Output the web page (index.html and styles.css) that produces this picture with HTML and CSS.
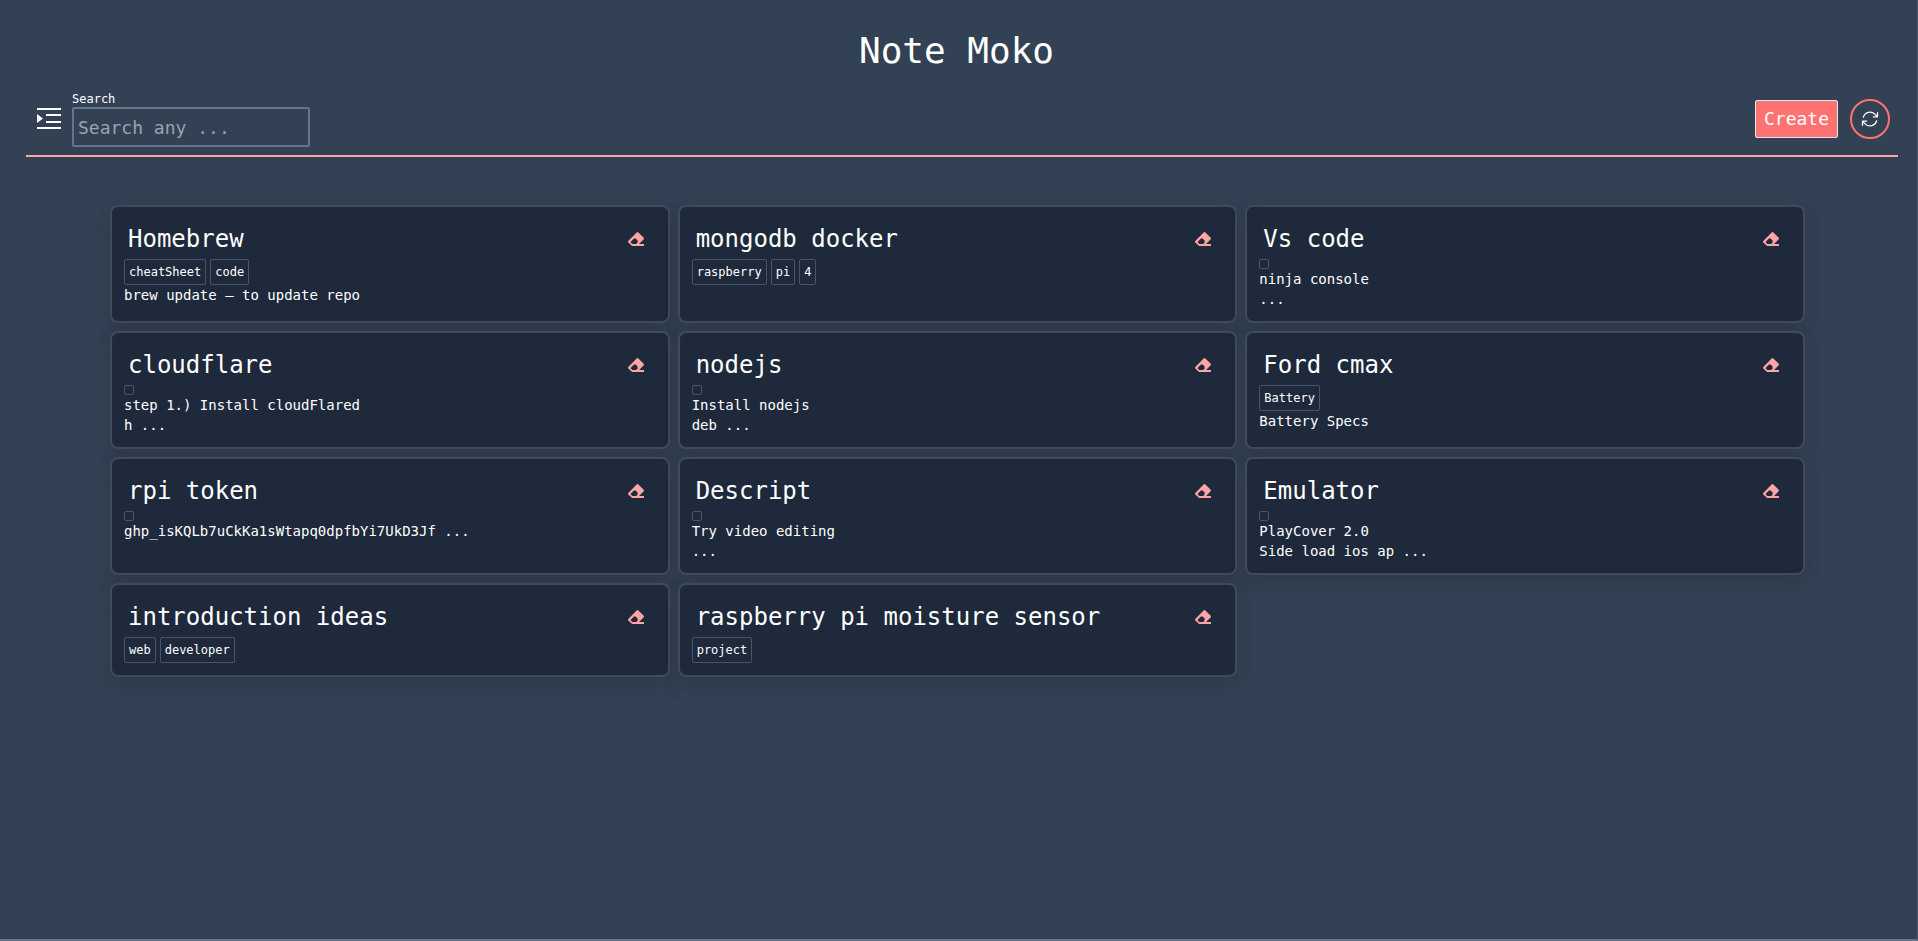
FILE: index.html
```html
<!DOCTYPE html>
<html lang="en">

<head>
    <meta charset="UTF-8">
    <meta name="viewport" content="width=device-width, initial-scale=1.0">
    <title>Note Moko</title>
    <link rel="stylesheet" href="styles.css">
</head>

<body>
    <svg class="sprite" aria-hidden="true">
        <symbol id="eraser" viewBox="0 0 16 14">
            <path fill-rule="evenodd" d="M8.600.500a1.300 1.300 0 0 1 1.800 0l5.100 5.100a1.300 1.300 0 0 1 0 1.800L11 12h5v2H4.200L.5 10.700a1.300 1.300 0 0 1 0-1.900zM5 7.400L3 9.500a1 1 0 0 0 0 1.200L4.400 12h3.800l1.400-1.600V8.600L7.600 6.600H6z" />
        </symbol>
    </svg>

    <h1 class="title">Note Moko</h1>

    <header class="toolbar">
        <button class="menu-button" aria-label="Menu">
            <svg width="24" height="22" viewBox="0 0 24 22" fill="#fff">
                <path d="M0 0h24v2H0zM9 6h15v2H9zM9 13h15v2H9zM0 19h24v2H0zM0 6l6 4.500L0 15z" />
            </svg>
        </button>
        <div class="search">
            <label for="search">Search</label>
            <input type="text" id="search" placeholder="Search any ...">
        </div>
        <div class="actions">
            <button class="create">Create</button>
            <button class="refresh" aria-label="Refresh">
                <svg width="20" height="20" viewBox="0 0 24 24" fill="none" stroke="#fff" stroke-width="1.5" stroke-linecap="round" stroke-linejoin="round">
                    <path d="M16.023 9.348h4.992v-.001M2.985 19.644v-4.992m0 0h4.992m-4.993 0l3.181 3.183a8.250 8.250 0 0 0 13.803-3.700M4.031 9.865a8.250 8.250 0 0 1 13.803-3.700l3.181 3.182m0-4.991v4.990" />
                </svg>
            </button>
        </div>
    </header>

    <main class="notes">
        <article class="note">
            <div class="note-head">
                <h2>Homebrew</h2>
                <button class="erase" aria-label="Delete"><svg><use href="#eraser" /></svg></button>
            </div>
            <div class="tags"><span class="tag">cheatSheet</span><span class="tag">code</span></div>
            <p>brew update – to update repo</p>
        </article>
        <article class="note">
            <div class="note-head">
                <h2>mongodb docker</h2>
                <button class="erase" aria-label="Delete"><svg><use href="#eraser" /></svg></button>
            </div>
            <div class="tags"><span class="tag">raspberry</span><span class="tag">pi</span><span class="tag">4</span></div>
        </article>
        <article class="note">
            <div class="note-head">
                <h2>Vs code</h2>
                <button class="erase" aria-label="Delete"><svg><use href="#eraser" /></svg></button>
            </div>
            <div class="tags"><span class="tag"></span></div>
            <p>ninja console<br>...</p>
        </article>
        <article class="note">
            <div class="note-head">
                <h2>cloudflare</h2>
                <button class="erase" aria-label="Delete"><svg><use href="#eraser" /></svg></button>
            </div>
            <div class="tags"><span class="tag"></span></div>
            <p>step 1.) Install cloudFlared<br>h ...</p>
        </article>
        <article class="note">
            <div class="note-head">
                <h2>nodejs</h2>
                <button class="erase" aria-label="Delete"><svg><use href="#eraser" /></svg></button>
            </div>
            <div class="tags"><span class="tag"></span></div>
            <p>Install nodejs<br>deb ...</p>
        </article>
        <article class="note">
            <div class="note-head">
                <h2>Ford cmax</h2>
                <button class="erase" aria-label="Delete"><svg><use href="#eraser" /></svg></button>
            </div>
            <div class="tags"><span class="tag">Battery</span></div>
            <p>Battery Specs</p>
        </article>
        <article class="note">
            <div class="note-head">
                <h2>rpi token</h2>
                <button class="erase" aria-label="Delete"><svg><use href="#eraser" /></svg></button>
            </div>
            <div class="tags"><span class="tag"></span></div>
            <p>ghp_isKQLb7uCkKa1sWtapq0dpfbYi7UkD3Jf ...</p>
        </article>
        <article class="note">
            <div class="note-head">
                <h2>Descript</h2>
                <button class="erase" aria-label="Delete"><svg><use href="#eraser" /></svg></button>
            </div>
            <div class="tags"><span class="tag"></span></div>
            <p>Try video editing<br>...</p>
        </article>
        <article class="note">
            <div class="note-head">
                <h2>Emulator</h2>
                <button class="erase" aria-label="Delete"><svg><use href="#eraser" /></svg></button>
            </div>
            <div class="tags"><span class="tag"></span></div>
            <p>PlayCover 2.0<br>Side load ios ap ...</p>
        </article>
        <article class="note">
            <div class="note-head">
                <h2>introduction ideas</h2>
                <button class="erase" aria-label="Delete"><svg><use href="#eraser" /></svg></button>
            </div>
            <div class="tags"><span class="tag">web</span><span class="tag">developer</span></div>
        </article>
        <article class="note">
            <div class="note-head">
                <h2>raspberry pi moisture sensor</h2>
                <button class="erase" aria-label="Delete"><svg><use href="#eraser" /></svg></button>
            </div>
            <div class="tags"><span class="tag">project</span></div>
        </article>
    </main>
</body>

</html>
```
FILE: styles.css
```css
* {
    box-sizing: border-box;
}

body {
    margin: 0;
    padding-top: 31px;
    min-height: 100vh;
    background-color: #334155;
    border-right: 1px solid #475569;
    border-bottom: 2px solid #64748b;
    color: white;
    font-family: Menlo, "DejaVu Sans Mono", monospace;
}

h1, h2, p {
    margin: 0;
    font-weight: normal;
}

button, input {
    font-family: inherit;
    color: white;
}

button {
    padding: 0;
    border: none;
    background: transparent;
    cursor: pointer;
}

svg {
    display: block;
}

.sprite {
    display: none;
}

.title {
    padding-right: 4px;
    font-size: 36px;
    line-height: 40px;
    text-align: center;
}

.toolbar {
    display: flex;
    align-items: center;
    gap: 8px;
    margin: 20px 19px 0 26px;
    padding: 0 8px 8px;
    border-bottom: 2px solid #fca5a5;
}

.menu-button {
    padding: 0 3px;
}

.search {
    display: flex;
    flex-direction: column;
    width: 238px;
}

.search label {
    font-size: 12px;
    line-height: 16px;
}

.search input {
    width: 100%;
    height: 40px;
    padding: 4px;
    border: 2px solid #64748b;
    border-radius: 2px;
    background: transparent;
    font-size: 18px;
}

.search input::placeholder {
    color: #9ca3af;
}

.actions {
    display: flex;
    align-items: center;
    gap: 12px;
    margin-left: auto;
}

.create {
    padding: 4px 8px;
    border: 1px solid #e2e8f0;
    border-radius: 2px;
    background-color: #ff7272;
    font-size: 18px;
    line-height: 28px;
}

.refresh {
    display: flex;
    align-items: center;
    justify-content: center;
    width: 40px;
    height: 40px;
    border: 2px solid #ff7272;
    border-radius: 50%;
}

.notes {
    display: grid;
    grid-template-columns: repeat(3, 1fr);
    gap: 8px;
    margin: 48px 112px 0 110px;
}

.note {
    padding: 12px;
    border: 2px solid #404b5a;
    border-radius: 8px;
    background-color: #1e293b;
    box-shadow: 0 10px 15px -3px rgba(47, 58, 68, 0.6), 0 4px 12px rgba(47, 58, 68, 0.4);
}

.note-head {
    display: flex;
    align-items: center;
    justify-content: space-between;
    padding: 4px 12px 4px 4px;
}

.note-head h2 {
    font-size: 24px;
    line-height: 32px;
}

.erase svg {
    width: 16px;
    height: 14px;
    fill: #fca5a5;
}

.tags {
    display: flex;
    gap: 4px;
}

.tag {
    padding: 4px;
    border: 1px solid #475569;
    border-radius: 2px;
    font-size: 12px;
    line-height: 16px;
}

.note p {
    font-size: 14px;
    line-height: 20px;
}
```
